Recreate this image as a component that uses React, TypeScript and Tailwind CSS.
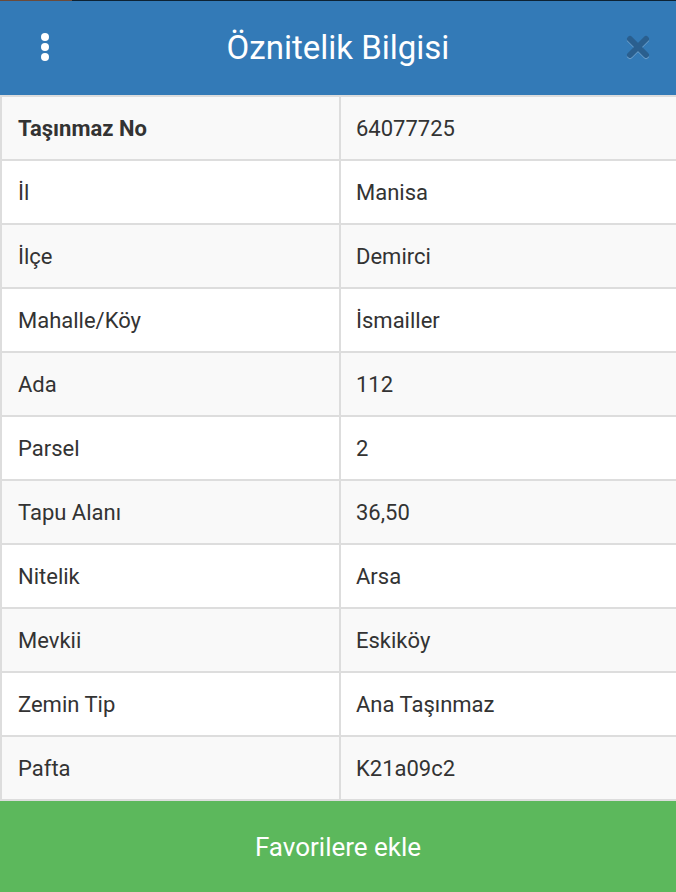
const rows: [string, string][] = [
  ['Taşınmaz No', '64077725'],
  ['İl', 'Manisa'],
  ['İlçe', 'Demirci'],
  ['Mahalle/Köy', 'İsmailler'],
  ['Ada', '112'],
  ['Parsel', '2'],
  ['Tapu Alanı', '36,50'],
  ['Nitelik', 'Arsa'],
  ['Mevkii', 'Eskiköy'],
  ['Zemin Tip', 'Ana Taşınmaz'],
  ['Pafta', 'K21a09c2'],
];

export default function App() {
  return (
    <div className="h-[892px] w-[676px] overflow-hidden bg-white font-['Roboto',sans-serif]">
      <div className="flex h-px">
        <div className="w-[72px] bg-[#6b4a3a]" />
        <div className="flex-1 bg-[#0d2233]" />
      </div>
      <header className="flex h-[94px] items-center bg-[#337ab7] pb-[2px] text-white">
        <div className="flex w-[90px] flex-col items-center gap-[2px]">
          <span className="h-[8px] w-[8px] rounded-full bg-white" />
          <span className="h-[8px] w-[8px] rounded-full bg-white" />
          <span className="h-[8px] w-[8px] rounded-full bg-white" />
        </div>
        <h1 className="flex-1 text-center text-[33px] leading-none">Öznitelik Bilgisi</h1>
        <div className="flex w-[90px] items-center justify-center">
          <svg width="26" height="26" viewBox="0 0 26 26" className="ml-[14px] drop-shadow-[0_1px_0_rgba(255,255,255,0.3)]">
            <path d="M5 5 L21 21 M21 5 L5 21" stroke="#2a5f8f" strokeWidth="6" strokeLinecap="round" />
          </svg>
        </div>
      </header>
      <table className="w-[680px] border-collapse text-[22px] text-[#333]">
        <tbody>
          {rows.map(([k, v], i) => (
            <tr key={k} className={i % 2 === 0 ? 'bg-[#f9f9f9]' : 'bg-white'}>
              <td className={`h-[64px] w-[339px] border-2 border-[#ddd] pl-[16px] ${i === 0 ? 'font-bold' : ''}`}>{k}</td>
              <td className="h-[64px] border-2 border-[#ddd] pl-[15px]">{v}</td>
            </tr>
          ))}
        </tbody>
      </table>
      <button className="flex h-[92px] w-full items-center justify-center bg-[#5cb85c] text-[26px] text-white">
        Favorilere ekle
      </button>
    </div>
  );
}
